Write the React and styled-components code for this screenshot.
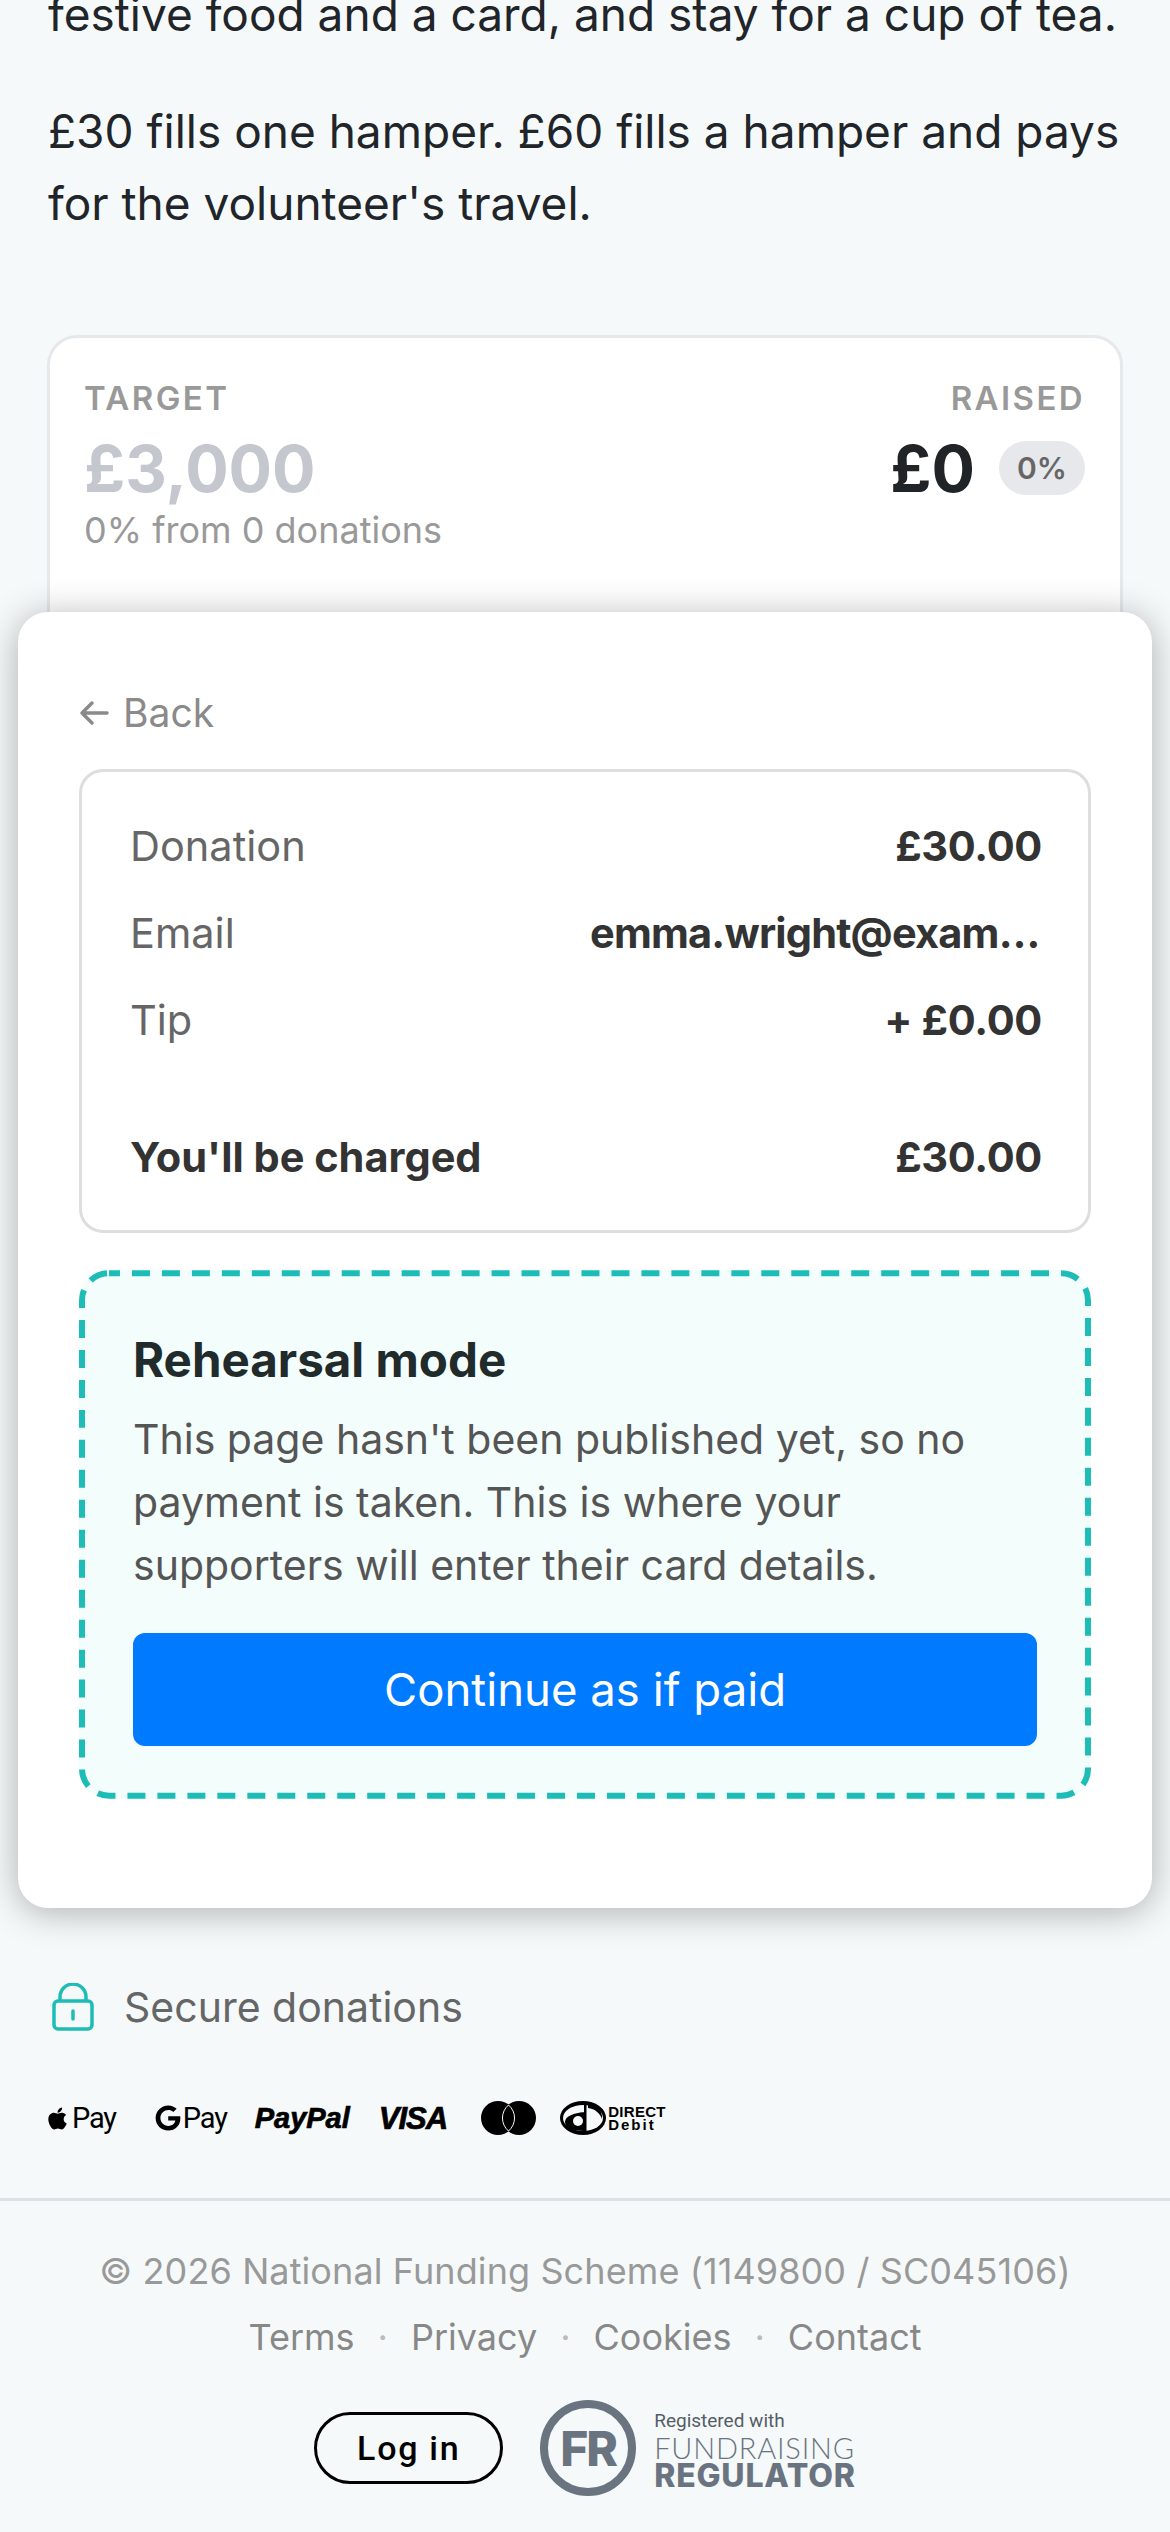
import React from 'react';
import styled, { createGlobalStyle } from 'styled-components';
import { FaApple, FaGoogle } from 'react-icons/fa';

const Global = createGlobalStyle`
  html, body { margin: 0; padding: 0; background: #f5f9fa; }
  body { font-family: Inter, "Liberation Sans", sans-serif; overflow-x: hidden; }
  * { box-sizing: border-box; }
`;
const Page = styled.div`
  width: 1170px; height: 2532px; overflow: hidden; background: #f5f9fa; display: flex; flex-direction: column;
`;
const Intro = styled.div`
  margin-top: -22px; padding: 0 48px; display: flex; flex-direction: column; gap: 45px;
`;
const Para = styled.p`
  margin: 0; font-size: 46px; line-height: 72px; color: #212529; white-space: nowrap;
`;
const StatsCard = styled.section`
  margin: 96px 47px 0; height: 330px; background: #fff; border: 3px solid #e6e9ec; border-radius: 30px;
  padding: 36px 35px 0 34px; display: flex; justify-content: space-between;
`;
const StatCol = styled.div`
  display: flex; flex-direction: column; align-items: ${p => (p.$right ? 'flex-end' : 'flex-start')};
`;
const StatLabel = styled.div`
  font-size: 33px; line-height: 48px; font-weight: 600; letter-spacing: 2.4px; color: #999; text-transform: uppercase;
`;
const StatValue = styled.div`
  margin-top: 3px; font-size: 64.5px; line-height: 88px; font-weight: 700; color: ${p => p.$muted ? '#c5c7cf' : '#212427'};
`;
const StatNote = styled.div`
  font-size: 36px; line-height: 44px; color: #999; margin-top: -5px;
`;
const RaisedRow = styled.div`
  display: flex; align-items: center; gap: 24px;
`;
const Pill = styled.span`
  width: 86px; height: 54px; border-radius: 27px; background: #e6e8ec; color: #666; font-size: 30px; font-weight: 600;
  display: flex; align-items: center; justify-content: center;
`;
const Sheet = styled.section`
  position: relative; margin: -53px 18px 0; height: 1296px; background: #fff; border-radius: 30px;
  box-shadow: 0 4px 36px rgba(0,0,0,.3); padding: 72px 61px 0; display: flex; flex-direction: column;
`;
const Back = styled.div`
  display: flex; align-items: center; gap: 14px; color: #8a8a8a; font-size: 39px; line-height: 58px; height: 58px;
`;
const Summary = styled.div`
  margin-top: 27px; height: 464px; border: 3px solid #dcdee0; border-radius: 24px; padding: 47px 46px 0 48px;
  display: flex; flex-direction: column;
`;
const Row = styled.div`
  display: flex; justify-content: space-between; height: 87px; line-height: 54px; font-size: 41.5px; color: #666;
  ${p => p.$total && 'margin-top: 50px; color: #333; font-weight: 650;'}
`;
const RowValue = styled.span`
  font-weight: 650; color: #333; letter-spacing: ${p => (p.$tight ? '-.8px' : '-.3px')}; max-width: 452px;
  overflow: hidden; text-overflow: ellipsis; white-space: nowrap;
`;
const Rehearsal = styled.div`
  position: relative; margin-top: 37px; height: 529px; background: #f3fdfc; border-radius: 30px;
  padding: 57px 54px 0; display: flex; flex-direction: column;
`;
const DashedOutline = styled.svg`
  position: absolute; inset: 0; width: 100%; height: 100%; pointer-events: none;
`;
const RehearsalTitle = styled.h3`
  margin: 0; font-size: 47.5px; line-height: 66px; font-weight: 700; color: #212b2c;
`;
const RehearsalText = styled.p`
  margin: 15px 0 0; font-size: 41px; line-height: 63px; color: #555;
`;
const PrimaryButton = styled.button`
  margin-top: 36px; height: 113px; width: 100%; border: 0; border-radius: 12px; background: #007aff; color: #fff;
  font-family: inherit; font-size: 45.5px;
`;
const Secure = styled.div`
  margin: 74px 0 0 52px; display: flex; align-items: center; gap: 30px; font-size: 41px; line-height: 50px; color: #666;
`;
const Logos = styled.div`
  margin: 57px 0 0 45px; height: 58px; display: flex; align-items: center; color: #000;
`;
const LogoItem = styled.div`
  display: flex; align-items: center; margin-left: ${p => p.$gap || 0}px; gap: ${p => p.$inner || 0}px;
`;
const PayText = styled.span`
  font-family: Roboto, sans-serif; font-size: 29px; letter-spacing: -1.2px; line-height: 1;
`;
const BrandText = styled.span`
  font-family: "Liberation Sans", sans-serif; font-weight: 700; font-style: italic; font-size: ${p => p.$size}px;
  letter-spacing: ${p => p.$ls || 0}px; line-height: 1; -webkit-text-stroke: .7px #000;
`;
const DDWords = styled.div`
  display: flex; flex-direction: column; font-family: "Liberation Sans", sans-serif; font-weight: 700; font-size: 15px;
  line-height: 13px; margin-left: 2px;
`;
const DDLine = styled.span`
  letter-spacing: ${p => p.$ls || 0}px;
`;
const Footer = styled.footer`
  margin-top: 51px; border-top: 3px solid #dfe2e5; padding-top: 46px; display: flex; flex-direction: column; align-items: center;
`;
const Copyright = styled.div`
  font-size: 36px; line-height: 48px; color: #999; letter-spacing: .1px; white-space: nowrap;
`;
const FooterLinks = styled.nav`
  margin-top: 18px; display: flex; gap: 23px; font-size: 36px; line-height: 48px; color: #888;
`;
const Dot = styled.span` color: #bbb; `;
const BottomRow = styled.div`
  margin-top: 39px; display: flex; align-items: center; gap: 37px;
`;
const LoginButton = styled.button`
  width: 189px; height: 72px; border: 3px solid #000; border-radius: 36px; background: transparent; color: #000;
  font-family: Roboto, sans-serif; font-size: 34px; font-weight: 500; letter-spacing: 1.7px;
`;
const Regulator = styled.div`
  display: flex; align-items: center; gap: 18px; color: #6a7480;
`;
const RegRing = styled.div`
  width: 96px; height: 96px; border: 8px solid #6a7480; border-radius: 50%; display: flex; align-items: center; justify-content: center;
  font-family: Inter, sans-serif; font-weight: 800; font-size: 48px; letter-spacing: -2px;
`;
const RegWords = styled.div`
  display: flex; flex-direction: column; white-space: nowrap;
`;
const RegSmall = styled.span`
  font-family: Roboto, sans-serif; font-size: 19px; line-height: 26px; color: #555d66;
`;
const RegThin = styled.span`
  font-family: Lato, sans-serif; font-weight: 300; font-size: 29px; line-height: 28px; letter-spacing: .8px;
`;
const RegBold = styled.span`
  font-family: Inter, sans-serif; font-weight: 800; font-size: 32px; line-height: 27px; letter-spacing: .8px;
`;

const BackArrow = () => (
  <svg width="30" height="26" viewBox="0 0 30 26" fill="none" stroke="#8a8a8a" strokeWidth="3.5" strokeLinecap="round" strokeLinejoin="round">
    <path d="M28 13H3M13 3L3 13l10 10" />
  </svg>
);
const LockIcon = () => (
  <svg width="42" height="48" viewBox="0 0 42 48" fill="none" stroke="#1dbcb6" strokeWidth="3.5">
    <rect x="2" y="18" width="38" height="28" rx="4" />
    <path d="M8 18V14a13 13 0 0 1 26 0v4" />
    <path d="M21 28v8" strokeLinecap="round" />
  </svg>
);
const MasterIcon = () => (
  <svg width="55" height="34" viewBox="0 0 55 34">
    <circle cx="17" cy="17" r="17" fill="#000" />
    <circle cx="38" cy="17" r="17" fill="#000" />
    <path d="M27.5 4a17 17 0 0 0 0 26a17 17 0 0 0 0-26z" fill="#000" stroke="#f5f9fa" strokeWidth="1" />
  </svg>
);
const DirectDebitIcon = () => (
  <svg width="46" height="34" viewBox="0 0 46 34">
    <ellipse cx="23" cy="17" rx="23" ry="17" fill="#000" />
    <ellipse cx="23" cy="17" rx="20" ry="13" fill="#f5f9fa" />
    <path d="M24 1h2.5v30H24zM24 11v19C14 30 5 27 5 21s9-9 19-10z" fill="#000" />
    <path d="M28 3c9 1 15 7 14 15c-2-6-7-10-14-11z" fill="#000" />
    <ellipse cx="18" cy="20" rx="5" ry="5" fill="#f5f9fa" />
  </svg>
);

export default function App() {
  return (
    <Page>
      <Global />
      <Intro>
        <Para>festive food and a card, and stay for a cup of tea.</Para>
        <Para>£30 fills one hamper. £60 fills a hamper and pays<br />for the volunteer's travel.</Para>
      </Intro>
      <StatsCard>
        <StatCol>
          <StatLabel>Target</StatLabel>
          <StatValue $muted>£3,000</StatValue>
          <StatNote>0% from 0 donations</StatNote>
        </StatCol>
        <StatCol $right>
          <StatLabel>Raised</StatLabel>
          <RaisedRow><StatValue>£0</StatValue><Pill>0%</Pill></RaisedRow>
        </StatCol>
      </StatsCard>
      <Sheet>
        <Back><BackArrow />Back</Back>
        <Summary>
          <Row>Donation<RowValue>£30.00</RowValue></Row>
          <Row>Email<RowValue $tight>emma.wright@example.com</RowValue></Row>
          <Row>Tip<RowValue>+ £0.00</RowValue></Row>
          <Row $total>You'll be charged<RowValue>£30.00</RowValue></Row>
        </Summary>
        <Rehearsal>
          <DashedOutline viewBox="0 0 1013 529">
            <rect x="3" y="3" width="1007" height="523" rx="27" fill="none" stroke="#1dbcb6" strokeWidth="6" strokeDasharray="18 12" strokeDashoffset="7" />
          </DashedOutline>
          <RehearsalTitle>Rehearsal mode</RehearsalTitle>
          <RehearsalText>This page hasn't been published yet, so no payment is taken. This is where your supporters will enter their card details.</RehearsalText>
          <PrimaryButton>Continue as if paid</PrimaryButton>
        </Rehearsal>
      </Sheet>
      <Secure><LockIcon />Secure donations</Secure>
      <Logos>
        <LogoItem $inner={2}><FaApple size={25} /><PayText>Pay</PayText></LogoItem>
        <LogoItem $gap={39} $inner={2}><FaGoogle size={26} /><PayText>Pay</PayText></LogoItem>
        <LogoItem $gap={28}><BrandText $size={29}>PayPal</BrandText></LogoItem>
        <LogoItem $gap={29}><BrandText $size={31} $ls={-1}>VISA</BrandText></LogoItem>
        <LogoItem $gap={34}><MasterIcon /></LogoItem>
        <LogoItem $gap={24}><DirectDebitIcon /><DDWords><DDLine $ls={.3}>DIRECT</DDLine><DDLine $ls={2}>Debit</DDLine></DDWords></LogoItem>
      </Logos>
      <Footer>
        <Copyright>© 2026 National Funding Scheme (1149800 / SC045106)</Copyright>
        <FooterLinks>
          <span>Terms</span><Dot>·</Dot><span>Privacy</span><Dot>·</Dot><span>Cookies</span><Dot>·</Dot><span>Contact</span>
        </FooterLinks>
        <BottomRow>
          <LoginButton>Log in</LoginButton>
          <Regulator>
            <RegRing>FR</RegRing>
            <RegWords>
              <RegSmall>Registered with</RegSmall>
              <RegThin>FUNDRAISING</RegThin>
              <RegBold>REGULATOR</RegBold>
            </RegWords>
          </Regulator>
        </BottomRow>
      </Footer>
    </Page>
  );
}
